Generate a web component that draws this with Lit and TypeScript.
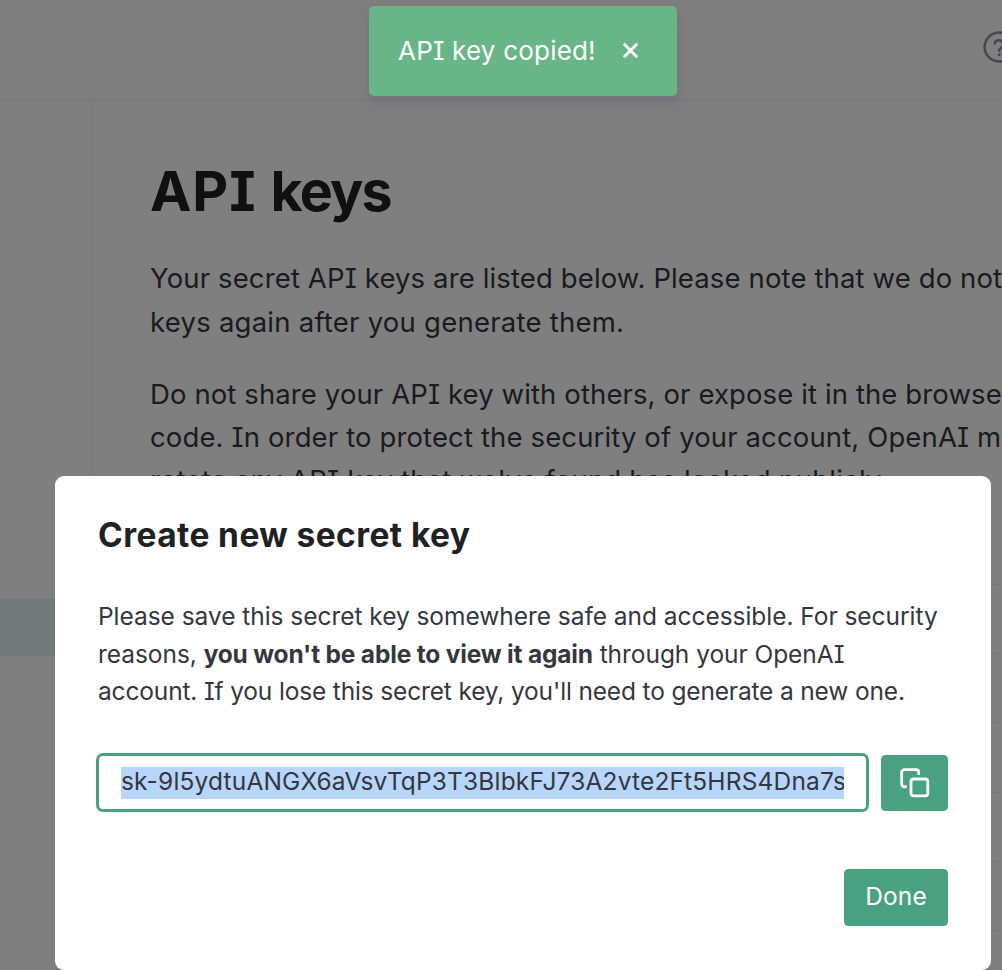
import { LitElement, html, css } from "lit";
import { customElement } from "lit/decorators.js";

@customElement("app-toast")
export class AppToast extends LitElement {
  static styles = css`
    :host {
      display: flex;
      align-items: center;
      box-sizing: border-box;
      width: 308px;
      height: 90px;
      padding: 0 29px;
      gap: 25px;
      border-radius: 5px;
      background: #68b687;
      color: #fff;
      font-size: 26px;
      line-height: 36px;
      letter-spacing: 0.2px;
      white-space: nowrap;
      box-shadow: 0 6px 14px rgba(50, 50, 93, 0.16);
    }
    svg {
      display: block;
      width: 19px;
      height: 19px;
      margin-bottom: 2px;
      flex: none;
    }
  `;

  render() {
    return html`
      <span>API key copied!</span>
      <svg viewBox="0 0 19 19" fill="none" stroke="#fff" stroke-width="2.8">
        <path d="M2.8 2.8 16.2 16.2M16.2 2.8 2.8 16.2" />
      </svg>
    `;
  }
}

@customElement("keys-page")
export class KeysPage extends LitElement {
  static styles = css`
    :host {
      display: flex;
      flex-direction: column;
      height: 970px;
      overflow: hidden;
      background: #fff;
      color: #353740;
    }
    header {
      display: flex;
      flex: none;
      box-sizing: border-box;
      height: 100px;
      padding: 31px 0 0 982.5px;
      border-bottom: 1px solid #ececf1;
    }
    header svg {
      flex: none;
      width: 32px;
      height: 32px;
    }
    .body {
      display: flex;
      flex: 1;
      min-height: 0;
    }
    nav {
      flex: none;
      width: 91px;
      padding-top: 499px;
      border-right: 1px solid #ececf1;
    }
    .current {
      height: 57px;
      background: #e6f3f0;
    }
    main {
      flex: none;
      width: 1100px;
      padding: 59px 0 0 58px;
    }
    h1 {
      margin: 0 0 34px;
      font-size: 55.5px;
      line-height: 64px;
      font-weight: 700;
      letter-spacing: -1.8px;
      color: #202123;
    }
    .caps {
      letter-spacing: 0.9px;
    }
    p {
      margin: 0 0 29px;
      font-size: 27.5px;
      line-height: 43.5px;
      white-space: nowrap;
    }
    .warning {
      line-height: 43px;
    }
    .line {
      display: block;
    }
    .a { letter-spacing: 0.13px; }
    .b { letter-spacing: 0.24px; }
    .c { letter-spacing: 0.11px; }
    .d { letter-spacing: 0.13px; }
    .e { letter-spacing: 0.19px; }
    .rows {
      margin-top: 81.5px;
    }
    .row {
      height: 68.4px;
      border-top: 1px solid #ececf1;
    }
  `;

  render() {
    return html`
      <header>
        <svg viewBox="0 0 32 32" fill="none" stroke="#8e8ea0" stroke-width="2.5" stroke-linecap="round">
          <circle cx="16" cy="16" r="14.4" />
          <path d="M11.6 12.4a4.5 4.5 0 0 1 8.8 1.3c0 2.9-4.3 3.2-4.3 6" />
          <circle cx="16.2" cy="23.8" r="1.5" fill="#8e8ea0" stroke="none" />
        </svg>
      </header>
      <div class="body">
        <nav><div class="current"></div></nav>
        <main>
          <h1><span class="caps">API </span>keys</h1>
          <p>
            <span class="line a">Your secret API keys are listed below. Please note that we do not</span>
            <span class="line b">keys again after you generate them.</span>
          </p>
          <p class="warning">
            <span class="line c">Do not share your API key with others, or expose it in the browser</span>
            <span class="line d">code. In order to protect the security of your account, OpenAI may</span>
            <span class="line e">rotate any API key that we've found has leaked publicly.</span>
          </p>
          <div class="rows">
            ${[0, 1, 2, 3, 4, 5].map(() => html`<div class="row"></div>`)}
          </div>
        </main>
      </div>
    `;
  }
}

@customElement("secret-key-dialog")
export class SecretKeyDialog extends LitElement {
  static styles = css`
    :host {
      display: block;
      box-sizing: border-box;
      width: 936px;
      height: 494px;
      padding: 39px 43px 0;
      border-radius: 9px;
      background: #fff;
      color: #353740;
    }
    h2 {
      margin: 0 0 43px;
      font-size: 33.5px;
      line-height: 40px;
      font-weight: 700;
      letter-spacing: 0.42px;
      color: #202123;
    }
    p {
      margin: 0 0 42.5px;
      font-size: 24.5px;
      line-height: 37.5px;
      white-space: nowrap;
    }
    .line {
      display: block;
    }
    .a { letter-spacing: -0.04px; }
    .b { letter-spacing: -0.05px; }
    .b b { letter-spacing: -0.18px; }
    .c { letter-spacing: -0.16px; }
    .key {
      display: flex;
      align-items: center;
      gap: 12px;
      margin-left: -2px;
    }
    .field {
      display: flex;
      align-items: flex-start;
      box-sizing: border-box;
      width: 773px;
      height: 59px;
      padding: 10.5px 22px 0;
      border: 3px solid #4aa181;
      border-radius: 7px;
    }
    .value {
      flex: 1;
      height: 28px;
      padding-bottom: 4px;
      overflow: hidden;
      background: #b8d5fb;
      font-size: 24.5px;
      line-height: 28px;
      letter-spacing: 0.17px;
      white-space: nowrap;
    }
    button {
      display: flex;
      align-items: center;
      justify-content: center;
      box-sizing: border-box;
      margin: 0;
      padding: 0;
      border: 0;
      border-radius: 4.5px;
      background: #4aa181;
      color: #fff;
      font: inherit;
      font-size: 24.5px;
      line-height: 36px;
    }
    .copy {
      width: 67px;
      height: 56px;
    }
    .copy svg {
      width: 32px;
      height: 32px;
    }
    .actions {
      display: flex;
      justify-content: flex-end;
      padding-top: 56.5px;
    }
    .done {
      width: 104px;
      height: 57px;
      letter-spacing: 0.1px;
      padding-bottom: 2px;
    }
  `;

  render() {
    return html`
      <h2>Create new secret key</h2>
      <p>
        <span class="line a">Please save this secret key somewhere safe and accessible. For security</span>
        <span class="line b">reasons, <b>you won't be able to view it again</b> through your OpenAI</span>
        <span class="line c">account. If you lose this secret key, you'll need to generate a new one.</span>
      </p>
      <div class="key">
        <div class="field">
          <div class="value">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</div>
        </div>
        <button class="copy" aria-label="Copy">
          <svg viewBox="0 0 24 24" fill="none" stroke="#fff" stroke-width="2.1" stroke-linecap="round" stroke-linejoin="round">
            <rect x="9" y="9" width="12.6" height="12.6" rx="2" />
            <path d="M5 14.8H4a2 2 0 0 1-2-2V4a2 2 0 0 1 2-2h8.8a2 2 0 0 1 2 2v1" />
          </svg>
        </button>
      </div>
      <div class="actions"><button class="done">Done</button></div>
    `;
  }
}

@customElement("app-root")
export class AppRoot extends LitElement {
  static styles = css`
    :host {
      display: block;
      position: relative;
      width: 1002px;
      height: 970px;
      overflow: hidden;
      font-family: Inter, "Open Sans", sans-serif;
      font-feature-settings: "cv08";
    }
    .overlay {
      position: absolute;
      inset: 0;
      background: rgba(0, 0, 0, 0.5);
    }
    app-toast {
      position: absolute;
      top: 6px;
      left: 369px;
    }
    secret-key-dialog {
      position: absolute;
      top: 476px;
      left: 55px;
    }
  `;

  render() {
    return html`
      <keys-page></keys-page>
      <div class="overlay"></div>
      <secret-key-dialog></secret-key-dialog>
      <app-toast></app-toast>
    `;
  }
}
